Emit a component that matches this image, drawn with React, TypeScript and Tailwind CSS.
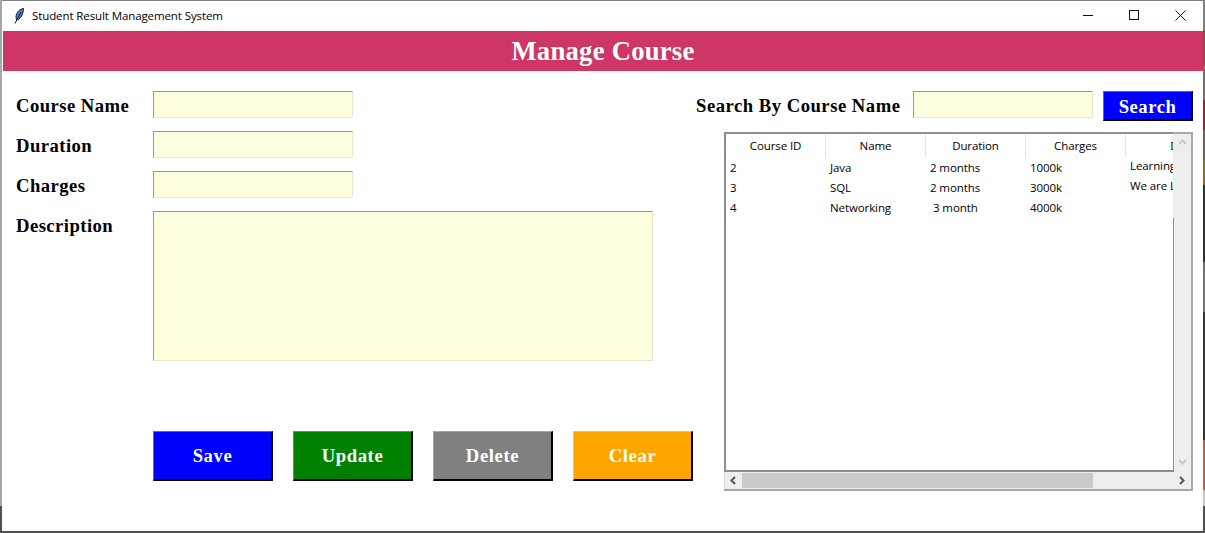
const serif = "font-['Liberation_Serif',_'Times_New_Roman',_serif]";

const columns = [
  { label: 'Course ID', width: 'w-[100px]' },
  { label: 'Name', width: 'w-[100px]' },
  { label: 'Duration', width: 'w-[100px]' },
  { label: 'Charges', width: 'w-[100px]' },
  { label: 'Description', width: 'w-[150px]' },
];

const rows = [
  { id: '2', name: 'Java', duration: '2 months', durationClass: 'pl-1', charges: '1000k', description: 'Learning Java basics' },
  { id: '3', name: 'SQL', duration: '2 months', durationClass: 'pl-1', charges: '3000k', description: 'We are Learning SQL' },
  { id: '4', name: 'Networking', duration: '3 month', durationClass: 'pl-[7px]', charges: '4000k', description: '' },
];

const fields = ['Course Name', 'Duration', 'Charges'];

const buttons = [
  { label: 'Save', className: 'bg-[#0000ff] border-t-[#5a5aff] border-l-[#5a5aff]' },
  { label: 'Update', className: 'bg-[#008000] border-t-[#4da64d] border-l-[#4da64d]' },
  { label: 'Delete', className: 'bg-[#808080] border-t-[#a6a6a6] border-l-[#a6a6a6]' },
  { label: 'Clear', className: 'bg-[#ffa500] border-t-[#ffc04d] border-l-[#ffc04d]' },
];

function Feather() {
  return (
    <svg width="10" height="16" viewBox="0 0 10 16">
      <path d="M9.500 0.500C6 1 2.500 4 2 8.500L2.500 12L4.500 11.500C7.500 9.500 9.500 5 9.500 0.500Z" fill="#4a7fc0" stroke="#10203a" strokeWidth="1" />
      <path d="M7 4L1 15.500" stroke="#10203a" strokeWidth="1" fill="none" />
    </svg>
  );
}

function WindowControls() {
  return (
    <div className="flex h-full items-center pb-0.5">
      <div className="flex h-full w-[46px] items-center justify-center">
        <svg width="10" height="10" viewBox="0 0 10 10">
          <path d="M0 5.500H10" stroke="#111" strokeWidth="1" />
        </svg>
      </div>
      <div className="flex h-full w-[46px] items-center justify-center">
        <svg width="10" height="10" viewBox="0 0 10 10">
          <rect x="0.500" y="0.500" width="9" height="9" fill="none" stroke="#111" strokeWidth="1" />
        </svg>
      </div>
      <div className="flex h-full w-[46px] items-center justify-center">
        <svg width="11" height="11" viewBox="0 0 11 11">
          <path d="M0.500 0.500L10.500 10.500M10.500 0.500L0.500 10.500" stroke="#111" strokeWidth="1" />
        </svg>
      </div>
    </div>
  );
}

function Chevron({ direction, color }: { direction: 'up' | 'down' | 'left' | 'right'; color: string }) {
  const paths = {
    up: 'M1 6L4.500 2.500L8 6',
    down: 'M1 3L4.500 6.500L8 3',
    left: 'M6 1L2.500 4.500L6 8',
    right: 'M3 1L6.500 4.500L3 8',
  };
  return (
    <svg width="9" height="9" viewBox="0 0 9 9">
      <path d={paths[direction]} fill="none" stroke={color} strokeWidth="2" />
    </svg>
  );
}

function CourseTable() {
  return (
    <div className="flex h-[359px] w-[469px] flex-col border-r-2 border-b-2 border-[#a8a8a8] font-['Open_Sans',_sans-serif] text-[11.5px] font-normal tracking-[-0.1px] text-black">
      <div className="flex min-h-0 flex-1">
        <div className="h-full w-[449px] overflow-hidden border-t-2 border-b-2 border-l-2 border-[#8c8c94] border-t-[#909090] bg-white">
          <div className="w-[550px]">
            <div className="flex h-[24px]">
              {columns.map((col) => (
                <div key={col.label} className={`flex ${col.width} shrink-0 items-center justify-center border-r border-[#e6e6e6]`}>
                  {col.label}
                </div>
              ))}
            </div>
            {rows.map((row) => (
              <div key={row.id} className="flex h-5 items-center">
                <div className="w-[100px] shrink-0 pl-1">{row.id}</div>
                <div className="w-[100px] shrink-0 pl-1">{row.name}</div>
                <div className={`w-[100px] shrink-0 ${row.durationClass}`}>{row.duration}</div>
                <div className="w-[100px] shrink-0 pl-1">{row.charges}</div>
                <div className="w-[150px] shrink-0 -translate-y-0.5 pl-1 whitespace-nowrap">{row.description}</div>
              </div>
            ))}
          </div>
        </div>
        <div className="flex flex-1 border-t-2 border-[#a8a8a8] bg-[#eeeeee]">
          <div className="flex w-px flex-col">
            <div className="h-[84px]" />
            <div className="flex-1 bg-[#8c8c94]" />
          </div>
          <div className="flex flex-1 flex-col items-center justify-between pt-1 pb-1.5">
            <Chevron direction="up" color="#c8c8c8" />
            <Chevron direction="down" color="#c8c8c8" />
          </div>
        </div>
      </div>
      <div className="flex h-[17px] items-center border-l border-[#dcdcdc] bg-[#eeeeee]">
        <div className="flex w-[17px] justify-center">
          <Chevron direction="left" color="#555555" />
        </div>
        <div className="h-[15px] w-[351px] bg-[#cacaca]" />
        <div className="flex flex-1 justify-end pr-[5px]">
          <Chevron direction="right" color="#555555" />
        </div>
      </div>
    </div>
  );
}

export default function App() {
  return (
    <div className="flex h-[533px] w-[1205px] items-start overflow-hidden bg-[#505050]">
      {/* desktop showing through at the window edges */}
      <div className="h-full w-0.5 bg-[linear-gradient(to_bottom,#a8a8a8_0,#a8a8a8_506px,#505050_506px)]" />
      <div className="h-[531px] w-[1201px] border-t border-[#808080] bg-white">
        <div className="flex h-[30px] items-center justify-between bg-white pl-3">
          <div className="flex items-center gap-2 font-['Open_Sans',_sans-serif] text-[11.5px] tracking-[-0.1px] text-black">
            <Feather />
            <span>Student Result Management System</span>
          </div>
          <WindowControls />
        </div>

        <div className={`ml-px flex h-10 items-center justify-center bg-[#cd3665] text-[26.67px] font-bold tracking-[0.25px] text-white ${serif}`}>
          Manage Course
        </div>

        <div className={`flex pt-5 text-[18.67px] font-bold text-black ${serif}`}>
          <div className="w-[693px] pl-[14px]">
            <div className="flex flex-col gap-[13px] tracking-[0.45px]">
              {fields.map((field) => (
                <div key={field} className="flex h-[27px] items-center">
                  <span className="w-[137px] pt-0.5">{field}</span>
                  <div className="h-[27px] w-[200px] border border-[#e8e8c8] border-t-[#9a9a80] border-l-[#9a9a80] bg-[#ffffe0]" />
                </div>
              ))}
              <div className="flex">
                <span className="w-[137px] leading-[29px]">Description</span>
                <div className="h-[150px] w-[500px] border border-[#e8e8c8] border-t-[#9a9a80] border-l-[#9a9a80] bg-[#ffffe0]" />
              </div>
            </div>
            <div className="ml-[137px] mt-[70px] flex gap-5 tracking-[0.6px]">
              {buttons.map((button) => (
                <button
                  key={button.label}
                  type="button"
                  className={`h-[50px] w-[120px] border-t border-r-2 border-b-2 border-l border-r-black border-b-black text-white ${button.className}`}
                >
                  {button.label}
                </button>
              ))}
            </div>
          </div>

          <div className="flex flex-col pl-[29px]">
            <div className="-ml-[29px] flex tracking-[0.5px]">
              <span className="ml-px w-[217px] leading-[30px] whitespace-nowrap">Search By Course Name</span>
              <div className="h-[27px] w-[180px] border border-[#e8e8c8] border-t-[#9a9a80] border-l-[#9a9a80] bg-[#ffffe0]" />
              <button
                type="button"
                className="ml-2.5 h-[30px] w-[90px] border-t border-r-2 border-b-2 border-l border-t-[#5a5aff] border-l-[#5a5aff] border-r-black border-b-black bg-[#0000ff] pt-px text-white"
              >
                Search
              </button>
            </div>
            <div className="mt-[11px]">
              <CourseTable />
            </div>
          </div>
        </div>
      </div>
      <div className="h-[533px] w-0.5 bg-[linear-gradient(to_bottom,#808080_0,#808080_30px,#6e6040_30px,#6e6040_65px,#806868_65px,#806868_100px,#a02030_100px,#a02030_130px,#706060_130px,#706060_160px,#8a7010_160px,#8a7010_185px,#303030_185px,#303030_262px,#707570_262px,#707570_312px,#303530_312px,#303530_440px,#c06040_440px,#c06040_490px,#c8c8c8_490px,#c8c8c8_506px,#505050_506px)]" />
    </div>
  );
}
